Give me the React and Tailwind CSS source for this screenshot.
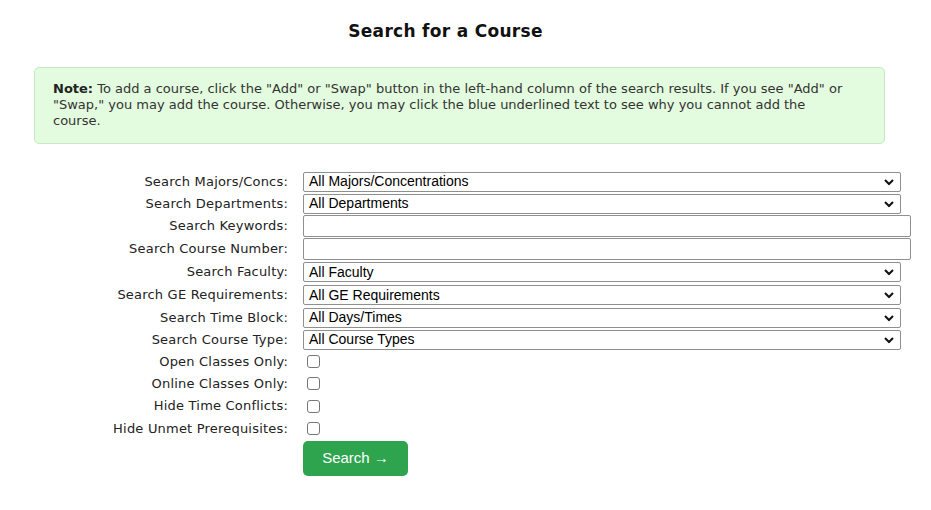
import React from 'react'

const selectRows = {
  majors: 'All Majors/Concentrations',
  departments: 'All Departments',
}

const Chevron = () => (
  <svg width="10" height="7" viewBox="0 0 10 7" className="absolute right-[6px] top-1/2 -translate-y-1/2">
    <path d="M1 1.5 L5 5.5 L9 1.5" fill="none" stroke="#111" strokeWidth="2" />
  </svg>
)

const FakeSelect = ({ value }) => (
  <div className="relative h-[20px] w-[598px] border border-[#8f8f8f] bg-white rounded-[2px] pl-[5px] flex items-center text-[14px] text-black font-['Liberation_Sans',Arial,sans-serif]">
    {value}
    <Chevron />
  </div>
)

const TextBox = () => (
  <div className="h-[22px] w-[608px] border border-[#8f8f8f] bg-white rounded-[2px]" />
)

const CheckBox = () => (
  <div className="ml-[4px] h-[13px] w-[13px] border border-[#767676] rounded-[3px] bg-white" />
)

const Row = ({ label, h, children }) => (
  <div className="flex items-center" style={{ height: h }}>
    <div className="w-[190px] text-right text-[13px] tracking-[0.2px] text-[#222] whitespace-nowrap">{label}</div>
    <div className="ml-[15px] flex items-center">{children}</div>
  </div>
)

export default function App() {
  return (
    <div className="w-[931px] h-[510px] bg-white font-['DejaVu_Sans',Verdana,sans-serif] text-[#222]">
      <h2 className="pt-[19px] text-center pr-[40px] text-[17px] font-bold text-[#111] tracking-[0.3px]">
        Search for a Course
      </h2>

      <div className="mt-[22px] ml-[34px] w-[851px] h-[77px] rounded-[5px] border border-[#c6e8c6] bg-[#e3fbde] pl-[18px] pr-[30px] pt-[13px] text-[13px] leading-[16px] text-[#333]">
        <p>
          <b className="text-[#222]">Note:</b> To add a course, click the "Add" or "Swap" button in the left-hand column of the search results. If you see "Add" or "Swap," you may add the course. Otherwise, you may click the blue underlined text to see why you cannot add the course.
        </p>
      </div>

      <div className="mt-[27px] ml-[98px] flex flex-col">
        <Row label="Search Majors/Concs:" h={22}><FakeSelect value={selectRows.majors} /></Row>
        <Row label="Search Departments:" h={22}><FakeSelect value={selectRows.departments} /></Row>
        <Row label="Search Keywords:" h={23}><TextBox /></Row>
        <Row label="Search Course Number:" h={23}><TextBox /></Row>
        <Row label="Search Faculty:" h={23}><FakeSelect value="All Faculty" /></Row>
        <Row label="Search GE Requirements:" h={23}><FakeSelect value="All GE Requirements" /></Row>
        <Row label="Search Time Block:" h={22}><FakeSelect value="All Days/Times" /></Row>
        <Row label="Search Course Type:" h={22}><FakeSelect value="All Course Types" /></Row>
        <Row label="Open Classes Only:" h={22}><CheckBox /></Row>
        <Row label="Online Classes Only:" h={22}><CheckBox /></Row>
        <Row label="Hide Time Conflicts:" h={23}><CheckBox /></Row>
        <Row label="Hide Unmet Prerequisites:" h={22}><CheckBox /></Row>
        <div className="ml-[205px] mt-[1px]">
          <button className="h-[35px] w-[105px] rounded-[5px] bg-[#2ea44f] text-white text-[15px] font-['Liberation_Sans',Arial,sans-serif]">
            Search →
          </button>
        </div>
      </div>
    </div>
  )
}
